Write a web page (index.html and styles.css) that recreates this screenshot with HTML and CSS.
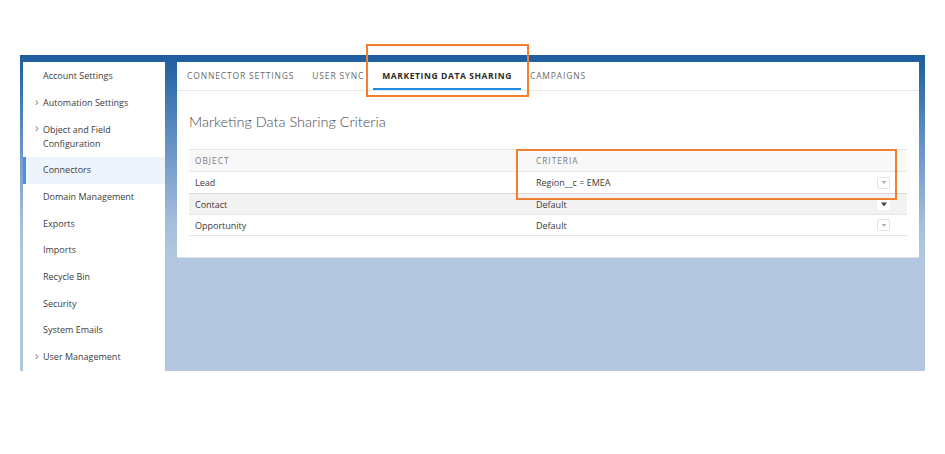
FILE: index.html
```html
<!DOCTYPE html>
<html>
<head>
<meta charset="utf-8">
<link rel="stylesheet" href="styles.css">
</head>
<body>
<div class="screen">
  <nav class="sidebar">
    <div class="nav-item">Account Settings</div>
    <div class="nav-item has-children"><span class="chev">&#8250;</span>Automation Settings</div>
    <div class="nav-item has-children"><span class="chev">&#8250;</span>Object and Field<br>Configuration</div>
    <div class="nav-item active">Connectors</div>
    <div class="nav-item">Domain Management</div>
    <div class="nav-item">Exports</div>
    <div class="nav-item">Imports</div>
    <div class="nav-item">Recycle Bin</div>
    <div class="nav-item">Security</div>
    <div class="nav-item">System Emails</div>
    <div class="nav-item has-children"><span class="chev">&#8250;</span>User Management</div>
  </nav>
  <section class="card">
    <div class="tabs">
      <div class="tab">CONNECTOR SETTINGS</div>
      <div class="tab">USER SYNC</div>
      <div class="tab selected">MARKETING DATA SHARING</div>
      <div class="tab">CAMPAIGNS</div>
    </div>
    <div class="content">
      <h1 class="title">Marketing Data Sharing Criteria</h1>
      <div class="table">
        <div class="row head">
          <div class="cell c1">OBJECT</div>
          <div class="cell c2">CRITERIA</div>
        </div>
        <div class="row tall">
          <div class="cell c1">Lead</div>
          <div class="cell c2">Region__c = EMEA<span class="dd"><svg width="8" height="5" viewBox="0 0 8 5"><path d="M1.5 1h5L4 4z" fill="#b0b0b0"/></svg></span></div>
        </div>
        <div class="row hover">
          <div class="cell c1">Contact</div>
          <div class="cell c2">Default<span class="dd dark"><svg width="8" height="5" viewBox="0 0 8 5"><path d="M1 0.5h6L4 4.5z" fill="#444"/></svg></span></div>
        </div>
        <div class="row">
          <div class="cell c1">Opportunity</div>
          <div class="cell c2">Default<span class="dd"><svg width="8" height="5" viewBox="0 0 8 5"><path d="M1.5 1h5L4 4z" fill="#b0b0b0"/></svg></span></div>
        </div>
      </div>
    </div>
  </section>
</div>
<div class="mark mark-tab"></div>
<div class="mark mark-criteria"></div>
</body>
</html>
```

FILE: styles.css
```css
html, body {
  margin: 0;
  padding: 0;
  background: #ffffff;
}
body {
  position: relative;
  width: 945px;
  height: 454px;
  font-family: "Open Sans", "Noto Sans", sans-serif;
}
.screen {
  margin: 55px 0 0 20px;
  width: 905px;
  height: 316px;
  box-sizing: border-box;
  padding: 7px 6px 0 3px;
  display: flex;
  align-items: flex-start;
  gap: 12px;
  background:
    linear-gradient(180deg, #1e5c9f 0px, #2a68a9 20px, #4d82bb 60px, #7fa3cf 120px, #a6bfdd 170px, #b3c7e0 205px, #b3c7e0 100%);
}
.sidebar {
  width: 142px;
  height: 309px;
  background: #ffffff;
  box-sizing: border-box;
  padding-top: 1px;
}
.nav-item {
  position: relative;
  padding: 6.33px 0 6.33px 20px;
  font-size: 9px;
  line-height: 14px;
  color: #3c3c3c;
}
.nav-item .chev {
  position: absolute;
  left: 12px;
  top: 5px;
  font-size: 12px;
  color: #8a8a8a;
}
.nav-item.active {
  background: #eef4fc;
  box-shadow: inset 3px 0 0 #4a8ee8;
}
.card {
  width: 742px;
  height: 196px;
  background: #ffffff;
  box-sizing: border-box;
  border-bottom: 1px solid #dde3ea;
}
.tabs {
  display: flex;
  height: 28px;
  padding-left: 1px;
  border-bottom: 1px solid #e8e8e8;
}
.tab {
  padding: 0 9px;
  height: 28px;
  line-height: 28px;
  font-size: 8.5px;
  letter-spacing: 0.85px;
  color: #6a6a6a;
  box-sizing: border-box;
}
.tab.selected {
  color: #2b2b2b;
  font-weight: 700;
  letter-spacing: 0.6px;
  border-bottom: 2px solid #1e88e5;
}
.content {
  padding: 0 12px;
}
.title {
  margin: 0;
  padding-top: 23px;
  height: 36px;
  box-sizing: border-box;
  font-size: 14.5px;
  font-weight: 300;
  line-height: 16px;
  color: #4b4b4b;
  font-family: "Lato", "Open Sans", sans-serif;
}
.table {
  margin-top: 22px;
  border-bottom: 1px solid #e6e6e6;
}
.row {
  display: flex;
  height: 20px;
  align-items: center;
  border-top: 1px solid #e6e6e6;
  font-size: 9px;
  color: #3a3a3a;
}
.row.tall {
  height: 21px;
}
.row.head {
  height: 21px;
  background: #f8f8f8;
  font-size: 8.3px;
  letter-spacing: 1px;
  color: #7a7a7a;
}
.row.hover {
  background: #f3f2f2;
  border-top-color: #d8d8d8;
}
.cell.c1 {
  width: 341px;
  padding-left: 6px;
  box-sizing: border-box;
}
.cell.c2 {
  flex: 1;
  padding-left: 6px;
  padding-right: 17px;
  display: flex;
  align-items: center;
  justify-content: space-between;
}
.dd {
  width: 13px;
  height: 12px;
  box-sizing: border-box;
  border: 1px solid #e2e2e2;
  border-radius: 2px;
  background: #ffffff;
  display: flex;
  align-items: center;
  justify-content: center;
}
.dd.dark {
  border-color: #ffffff;
}
.mark {
  position: absolute;
  border: 2px solid #ef8033;
  box-sizing: border-box;
}
.mark-tab {
  left: 366px;
  top: 44px;
  width: 163px;
  height: 53px;
}
.mark-criteria {
  left: 516px;
  top: 149px;
  width: 381px;
  height: 51px;
}
```
